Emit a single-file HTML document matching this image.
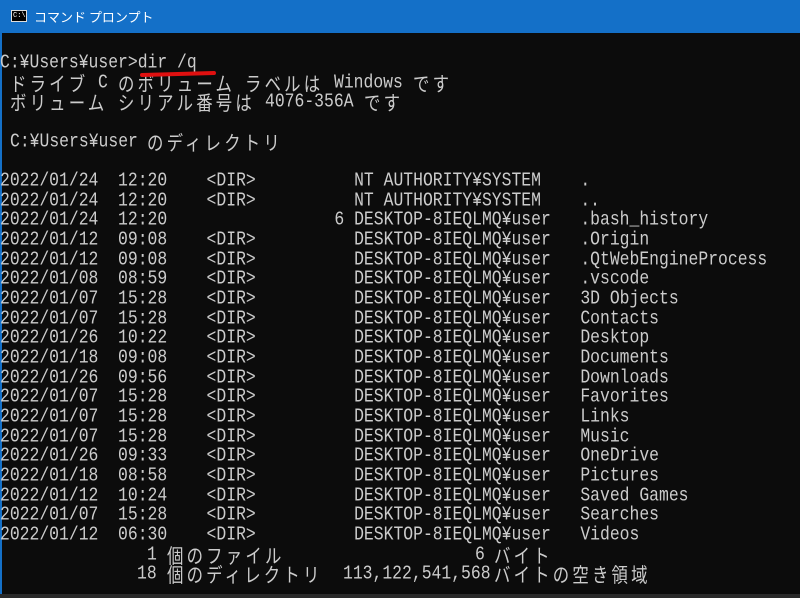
<!DOCTYPE html>
<html><head><meta charset="utf-8">
<style>
html,body{margin:0;padding:0;}
body{width:800px;height:598px;background:#0c0c0c;position:relative;overflow:hidden;}
.title{position:absolute;left:0;top:0;width:800px;height:33px;background:#1470c8;}
.title .t{position:absolute;left:34px;top:7px;color:#fff;font:13px "Noto Sans CJK JP",sans-serif;}
.icon{position:absolute;left:11px;top:10px;width:16px;height:12px;background:#000;border:1px solid #ddd;box-sizing:border-box;color:#fff;font:7px "Liberation Mono",monospace;line-height:10px;padding-left:1px;}
.edge{position:absolute;left:0;top:33px;width:2px;height:565px;background:#1470c8;}
.l{position:absolute;left:0;height:20px;width:800px;color:#cccccc;font-family:"Liberation Mono","Noto Sans CJK JP",monospace;font-size:16.4px;line-height:16.4px;transform:scaleY(1.2);transform-origin:0 0;white-space:pre;}
.l span{position:absolute;top:0;}
.j{font-family:"Noto Sans CJK JP",sans-serif;letter-spacing:3.2px;}
.red{position:absolute;left:140px;top:72px;width:76px;height:4px;background:#e01010;border-radius:2px;transform:rotate(-1.5deg);}
.bot{position:absolute;left:0;top:594px;width:800px;height:4px;background:#2a2a2a;}
</style></head><body>
<div class="title"><div class="icon">C:\</div><div class="t">コマンド プロンプト</div></div>
<div class="edge"></div>

<div class="l" style="top:53px"><span style="left:0">C:¥Users¥user&gt;dir /q</span></div>
<div class="l" style="top:73px"><span style="left:10px" class="j">ドライブ</span><span style="left:98px">C</span><span style="left:118px" class="j">のボリューム</span><span style="left:245px" class="j">ラベルは</span><span style="left:334px">Windows</span><span style="left:413px" class="j">です</span></div>
<div class="l" style="top:92px"><span style="left:10px" class="j">ボリューム</span><span style="left:118px" class="j">シリアル番号は</span><span style="left:265px">4076-356A</span><span style="left:364px" class="j">です</span></div>
<div class="l" style="top:132px"><span style="left:10px">C:¥Users¥user</span><span style="left:147px" class="j">のディレクトリ</span></div>

<div class="l" style="top:171px"><span style="left:0">2022/01/24  12:20    &lt;DIR&gt;          NT AUTHORITY¥SYSTEM    .</span></div>
<div class="l" style="top:191px"><span style="left:0">2022/01/24  12:20    &lt;DIR&gt;          NT AUTHORITY¥SYSTEM    ..</span></div>
<div class="l" style="top:210px"><span style="left:0">2022/01/24  12:20                 6 DESKTOP-8IEQLMQ¥user   .bash_history</span></div>
<div class="l" style="top:230px"><span style="left:0">2022/01/12  09:08    &lt;DIR&gt;          DESKTOP-8IEQLMQ¥user   .Origin</span></div>
<div class="l" style="top:250px"><span style="left:0">2022/01/12  09:08    &lt;DIR&gt;          DESKTOP-8IEQLMQ¥user   .QtWebEngineProcess</span></div>
<div class="l" style="top:269px"><span style="left:0">2022/01/08  08:59    &lt;DIR&gt;          DESKTOP-8IEQLMQ¥user   .vscode</span></div>
<div class="l" style="top:289px"><span style="left:0">2022/01/07  15:28    &lt;DIR&gt;          DESKTOP-8IEQLMQ¥user   3D Objects</span></div>
<div class="l" style="top:309px"><span style="left:0">2022/01/07  15:28    &lt;DIR&gt;          DESKTOP-8IEQLMQ¥user   Contacts</span></div>
<div class="l" style="top:328px"><span style="left:0">2022/01/26  10:22    &lt;DIR&gt;          DESKTOP-8IEQLMQ¥user   Desktop</span></div>
<div class="l" style="top:348px"><span style="left:0">2022/01/18  09:08    &lt;DIR&gt;          DESKTOP-8IEQLMQ¥user   Documents</span></div>
<div class="l" style="top:368px"><span style="left:0">2022/01/26  09:56    &lt;DIR&gt;          DESKTOP-8IEQLMQ¥user   Downloads</span></div>
<div class="l" style="top:387px"><span style="left:0">2022/01/07  15:28    &lt;DIR&gt;          DESKTOP-8IEQLMQ¥user   Favorites</span></div>
<div class="l" style="top:407px"><span style="left:0">2022/01/07  15:28    &lt;DIR&gt;          DESKTOP-8IEQLMQ¥user   Links</span></div>
<div class="l" style="top:427px"><span style="left:0">2022/01/07  15:28    &lt;DIR&gt;          DESKTOP-8IEQLMQ¥user   Music</span></div>
<div class="l" style="top:446px"><span style="left:0">2022/01/26  09:33    &lt;DIR&gt;          DESKTOP-8IEQLMQ¥user   OneDrive</span></div>
<div class="l" style="top:466px"><span style="left:0">2022/01/18  08:58    &lt;DIR&gt;          DESKTOP-8IEQLMQ¥user   Pictures</span></div>
<div class="l" style="top:486px"><span style="left:0">2022/01/12  10:24    &lt;DIR&gt;          DESKTOP-8IEQLMQ¥user   Saved Games</span></div>
<div class="l" style="top:505px"><span style="left:0">2022/01/07  15:28    &lt;DIR&gt;          DESKTOP-8IEQLMQ¥user   Searches</span></div>
<div class="l" style="top:525px"><span style="left:0">2022/01/12  06:30    &lt;DIR&gt;          DESKTOP-8IEQLMQ¥user   Videos</span></div>
<div class="l" style="top:545px"><span style="left:147px">1</span><span style="left:167px" class="j">個のファイル</span><span style="left:475px">6</span><span style="left:494px" class="j">バイト</span></div>
<div class="l" style="top:564px"><span style="left:137px">18</span><span style="left:167px" class="j">個のディレクトリ</span><span style="left:343px">113,122,541,568</span><span style="left:494px" class="j">バイトの空き領域</span></div>

<div class="red"></div>
<div class="bot"></div>
</body></html>
